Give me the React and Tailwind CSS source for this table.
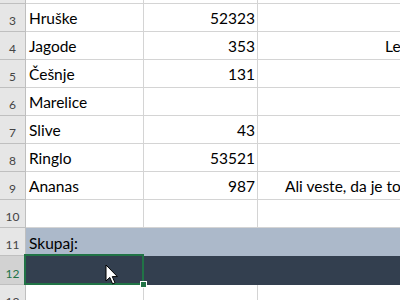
import React from 'react';

const rows = [
    { n: 3, a: 'Hruške', b: '52323' },
    { n: 4, a: 'Jagode', b: '353', c: 'Le', cPad: 'pl-[127px]' },
    { n: 5, a: 'Češnje', b: '131' },
    { n: 6, a: 'Marelice', b: '' },
    { n: 7, a: 'Slive', b: '43' },
    { n: 8, a: 'Ringlo', b: '53521' },
    { n: 9, a: 'Ananas', b: '987', c: 'Ali veste, da je to gotovo res?', cPad: 'pl-[27px]' },
    { n: 10, a: '', b: '' },
];

const font = { fontFamily: 'Lato, "Liberation Sans", sans-serif' };

const RowHead = ({ n, selected }) => (
    <div
        className={`w-[26px] shrink-0 border-r border-b border-[#bfbfbf] flex items-end justify-center pb-[3px] text-[12px] leading-[14px] ${
            selected ? 'bg-[#d2d2d2] text-[#217346]' : 'bg-[#e6e6e6] text-[#444]'
        }`}
    >
        {n}
    </div>
);

const App = () => {
    return (
        <div className="relative w-[400px] h-[300px] overflow-hidden bg-white text-black" style={font}>
            {/* partial row 2 */}
            <div className="flex h-[4px]">
                <div className="w-[26px] shrink-0 bg-[#e6e6e6] border-r border-b border-[#bfbfbf]" />
                <div className="w-[118px] shrink-0 border-r border-b border-[#d4d4d4]" />
                <div className="w-[114px] shrink-0 border-r border-b border-[#d4d4d4]" />
                <div className="flex-1 border-b border-[#d4d4d4]" />
            </div>

            {rows.map((r) => (
                <div key={r.n} className="flex h-[28px]">
                    <RowHead n={r.n} />
                    <div className="w-[118px] shrink-0 border-r border-b border-[#d4d4d4] flex items-end pl-[3px] pb-[4px] text-[15.5px] leading-[18px] whitespace-nowrap">
                        {r.a}
                    </div>
                    <div className="w-[114px] shrink-0 border-r border-b border-[#d4d4d4] flex items-end justify-end pr-[2px] pb-[4px] text-[15.5px] leading-[18px]">
                        {r.b}
                    </div>
                    <div className={`flex-1 border-b border-[#d4d4d4] flex items-end pb-[4px] text-[15.5px] leading-[18px] whitespace-nowrap overflow-hidden ${r.cPad || ''}`}>
                        {r.c}
                    </div>
                </div>
            ))}

            {/* Skupaj row */}
            <div className="flex h-[28px]">
                <RowHead n={11} />
                <div className="flex-1 bg-[#acb9ca] flex items-end pl-[3px] pb-[4px] text-[15.5px] leading-[18px]">
                    Skupaj:
                </div>
            </div>

            {/* selected dark row */}
            <div className="flex h-[29px]">
                <RowHead n={12} selected />
                <div className="flex-1 bg-[#333f4f]" />
            </div>

            {/* partial row 13 */}
            <div className="flex h-[28px]">
                <RowHead n={13} />
                <div className="w-[118px] shrink-0 border-r border-[#d4d4d4]" />
                <div className="w-[114px] shrink-0 border-r border-[#d4d4d4]" />
                <div className="flex-1" />
            </div>

            {/* selection box over A12 */}
            <div className="absolute left-[24px] top-[254px] w-[120px] h-[31px] border-2 border-[#217346]" />
            <div className="absolute left-[140px] top-[281px] w-[7px] h-[7px] bg-[#217346] border border-white" />

            {/* mouse pointer */}
            <svg className="absolute left-[105px] top-[264px]" width="14" height="22" viewBox="0 0 14 22">
                <path
                    d="M1 1 L1 17 L4.8 13.4 L7.6 19.8 L10 18.8 L7.3 12.6 L12.4 12.6 Z"
                    fill="#fff"
                    stroke="#000"
                    strokeWidth="1"
                    strokeLinejoin="miter"
                />
            </svg>
        </div>
    );
};

export default App;
